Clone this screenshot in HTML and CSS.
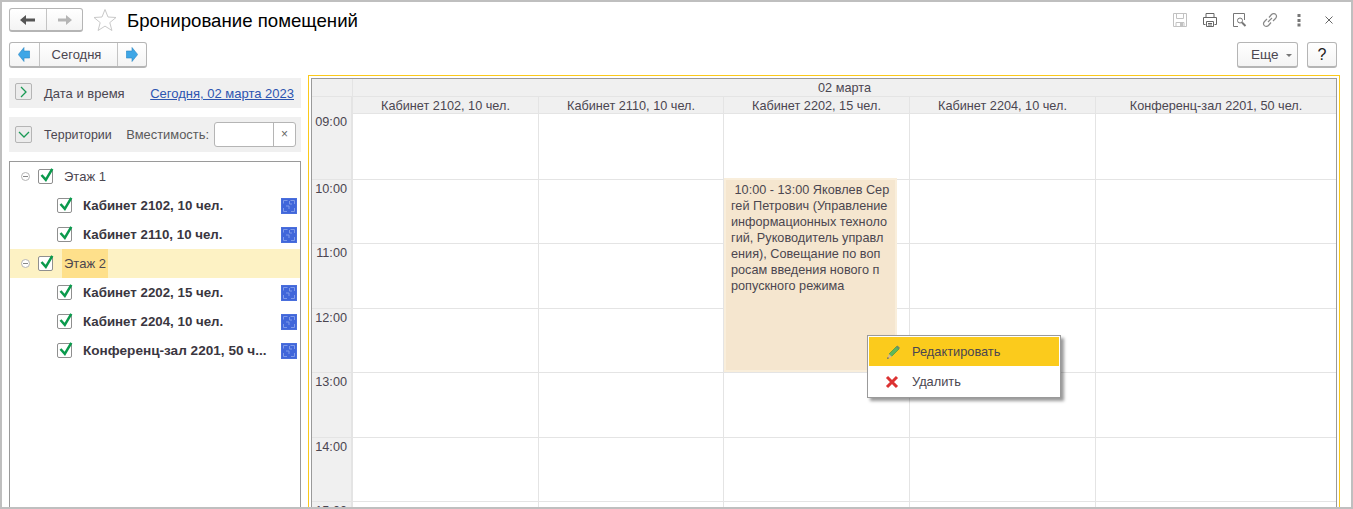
FILE: index.html
```html
<!DOCTYPE html>
<html lang="ru">
<head>
<meta charset="utf-8">
<title>Бронирование помещений</title>
<link rel="stylesheet" href="styles.css">
</head>
<body>
<svg width="0" height="0" class="defs">
  <defs>
    <symbol id="chk" viewBox="0 0 16 15" overflow="visible">
      <rect x="0.5" y="0.5" width="14" height="14" rx="1.5" fill="#fff" stroke="#8f8f8f"/>
      <path d="M3.500 6 L7.800 10.800 L14.300 -0.200" fill="none" stroke="#0a9a4c" stroke-width="2.500"/>
    </symbol>
    <symbol id="room" viewBox="0 0 16 16">
      <rect width="16" height="16" fill="#4a6fdc"/>
      <rect x="1" y="1" width="14" height="14" fill="#4066da"/>
      <path d="M2.500 5.500V2.500H6.500M9.500 2.500H13.500V6M13.500 10V13.500H10M6 13.500H2.500V10M8.500 3V6H11M5 8H8V11" fill="none" stroke="#7f9ae8"/>
    </symbol>
  </defs>
</svg>
<div class="window">
  <header class="titlebar">
    <div class="btn-group nav-group">
      <button class="seg seg-nav">
        <svg width="16" height="12" viewBox="0 0 16 12"><path d="M0 6 L6 1 V4.500 H15 V7.500 H6 V11 Z" fill="#555"/></svg>
      </button>
      <button class="seg seg-nav">
        <svg width="16" height="12" viewBox="0 0 16 12"><path d="M15 6 L9 1 V4.500 H1 V7.500 H9 V11 Z" fill="#b5b5b5"/></svg>
      </button>
    </div>
    <svg class="star" width="24" height="24" viewBox="0 0 24 24"><path d="M12 1.500 L15 9 L23 9.500 L16.800 14.600 L18.900 22.500 L12 18.100 L5.100 22.500 L7.200 14.600 L1 9.500 L9 9 Z" fill="#fff" stroke="#c9c9c9"/></svg>
    <h1 class="title">Бронирование помещений</h1>
    <div class="win-icons">
      <svg width="16" height="16" viewBox="0 0 16 16"><path d="M1.500 1.500h13v13h-13zM4.500 1.500v5h7v-5M4 14.500v-4h8v4" fill="none" stroke="#c2c2c2"/><rect x="8" y="11" width="3" height="3" fill="#c2c2c2"/></svg>
      <svg class="ic-print" width="16" height="16" viewBox="0 0 16 16"><path d="M4 5V1.500h8V5M3.500 12.500h-2v-7h13v7h-2M4.500 9.500h7v5h-7zM6 11.500h4M6 13h4" fill="none" stroke="#666"/></svg>
      <svg class="ic-find" width="16" height="16" viewBox="0 0 16 16"><path d="M6 14.500H1.500v-13h11V8" fill="none" stroke="#777"/><circle cx="8" cy="8.500" r="2.500" fill="none" stroke="#777"/><path d="M10 10.500l3.500 3.500" stroke="#777" stroke-width="2"/></svg>
      <svg class="ic-link" width="16" height="16" viewBox="0 0 16 16"><path d="M7 5.500l2.500-3c1.500-1.500 3.500-1 4.300 0s1 2.600-.3 4l-2.500 2.500M9 10.500l-2.500 3c-1.500 1.500-3.500 1-4.300 0s-1-2.600.3-4l2.500-2.500M6 10l4-4" fill="none" stroke="#888" stroke-width="1.200"/></svg>
      <svg class="ic-more" width="4" height="14" viewBox="0 0 4 14"><rect x="0.500" y="1" width="3" height="3" fill="#777"/><rect x="0.500" y="6" width="3" height="3" fill="#777"/><rect x="0.500" y="10.500" width="3" height="3" fill="#777"/></svg>
      <svg class="ic-close" width="8" height="8" viewBox="0 0 8 8"><path d="M.5.500l7 7M7.500.500l-7 7" stroke="#666"/></svg>
    </div>
  </header>

  <div class="toolbar">
    <div class="btn-group today-group">
      <button class="seg seg-arrow">
        <svg width="12" height="15" viewBox="0 0 12 15"><path d="M0.300 7.500 L6 0.500 V4 H11.700 V11 H6 V14.500 Z" fill="#3ea6e6" stroke="#2b86c4" stroke-width=".6"/></svg>
      </button>
      <button class="seg seg-today">Сегодня</button>
      <button class="seg seg-arrow">
        <svg width="12" height="15" viewBox="0 0 12 15"><path d="M11.700 7.500 L6 0.500 V4 H0.300 V11 H6 V14.500 Z" fill="#3ea6e6" stroke="#2b86c4" stroke-width=".6"/></svg>
      </button>
    </div>
    <div class="toolbar-right">
      <button class="btn btn-more">Еще <span class="caret"></span></button>
      <button class="btn btn-help">?</button>
    </div>
  </div>

  <div class="main">
    <aside class="side">
      <div class="panel panel-date">
        <span class="toggle"><svg width="10" height="12" viewBox="0 0 10 12"><path d="M2 1l5 5-5 5" fill="none" stroke="#1a9a55" stroke-width="1.300"/></svg></span>
        <span class="panel-label">Дата и время</span>
        <a class="date-link" href="#">Сегодня, 02 марта 2023</a>
      </div>
      <div class="panel panel-terr">
        <span class="toggle"><svg width="12" height="10" viewBox="0 0 12 10"><path d="M1 2l5 5 5-5" fill="none" stroke="#1a9a55" stroke-width="1.300"/></svg></span>
        <span class="panel-label">Территории</span>
        <span class="cap-label">Вместимость:</span>
        <span class="cap-input"><span class="cap-field"></span><span class="cap-clear">×</span></span>
      </div>
      <div class="tree">
        <div class="tree-row group"><span class="minus"></span><svg class="chk" width="16" height="15"><use href="#chk"/></svg><span class="group-name">Этаж 1</span></div>
        <div class="tree-row item"><svg class="chk" width="16" height="15"><use href="#chk"/></svg><span class="item-name">Кабинет 2102, 10 чел.</span><svg class="room" width="16" height="16"><use href="#room"/></svg></div>
        <div class="tree-row item"><svg class="chk" width="16" height="15"><use href="#chk"/></svg><span class="item-name">Кабинет 2110, 10 чел.</span><svg class="room" width="16" height="16"><use href="#room"/></svg></div>
        <div class="tree-row group current"><span class="minus"></span><svg class="chk" width="16" height="15"><use href="#chk"/></svg><span class="group-name selected">Этаж 2</span></div>
        <div class="tree-row item"><svg class="chk" width="16" height="15"><use href="#chk"/></svg><span class="item-name">Кабинет 2202, 15 чел.</span><svg class="room" width="16" height="16"><use href="#room"/></svg></div>
        <div class="tree-row item"><svg class="chk" width="16" height="15"><use href="#chk"/></svg><span class="item-name">Кабинет 2204, 10 чел.</span><svg class="room" width="16" height="16"><use href="#room"/></svg></div>
        <div class="tree-row item"><svg class="chk" width="16" height="15"><use href="#chk"/></svg><span class="item-name long">Конференц-зал 2201, 50 ч...</span><svg class="room" width="16" height="16"><use href="#room"/></svg></div>
      </div>
    </aside>

    <section class="cal-focus">
      <div class="cal">
        <div class="cal-row cal-date"><div class="c-time"></div><div class="c-date">02 марта</div></div>
        <div class="cal-row cal-head">
          <div class="c-time"></div>
          <div class="c-head">Кабинет 2102, 10 чел.</div>
          <div class="c-head">Кабинет 2110, 10 чел.</div>
          <div class="c-head">Кабинет 2202, 15 чел.</div>
          <div class="c-head">Кабинет 2204, 10 чел.</div>
          <div class="c-head">Конференц-зал 2201, 50 чел.</div>
        </div>
        <div class="cal-row hour h1"><div class="c-time">09:00</div><div class="c"></div><div class="c"></div><div class="c"></div><div class="c"></div><div class="c"></div></div>
        <div class="cal-row hour h2"><div class="c-time">10:00</div><div class="c"></div><div class="c"></div><div class="c"></div><div class="c"></div><div class="c"></div></div>
        <div class="cal-row hour h3"><div class="c-time">11:00</div><div class="c"></div><div class="c"></div><div class="c"></div><div class="c"></div><div class="c"></div></div>
        <div class="cal-row hour h2"><div class="c-time">12:00</div><div class="c"></div><div class="c"></div><div class="c"></div><div class="c"></div><div class="c"></div></div>
        <div class="cal-row hour h3"><div class="c-time">13:00</div><div class="c"></div><div class="c"></div><div class="c"></div><div class="c"></div><div class="c"></div></div>
        <div class="cal-row hour h2"><div class="c-time">14:00</div><div class="c"></div><div class="c"></div><div class="c"></div><div class="c"></div><div class="c"></div></div>
        <div class="cal-row hour h3"><div class="c-time">15:00</div><div class="c"></div><div class="c"></div><div class="c"></div><div class="c"></div><div class="c"></div></div>
        <div class="event">&nbsp;10:00 - 13:00 Яковлев Сер<br>гей Петрович (Управление<br>информационных техноло<br>гий, Руководитель управл<br>ения), Совещание по воп<br>росам введения нового п<br>ропускного режима</div>
      </div>
    </section>
  </div>

  <div class="menu">
    <div class="menu-item active">
      <svg width="16" height="16" viewBox="0 0 16 16"><path d="M4 10 L11.500 2.500 L14 5 L6.500 12.500 Z" fill="#5cb85c" stroke="#3f8f3f" stroke-width=".6"/><path d="M11 3l1.500-1.500 2.500 2.500L13.500 5.500z" fill="#6a8f6a"/><path d="M4 10l-2 5 5-2.200z" fill="#d8b98a"/><path d="M2.800 13l-.8 2 2-.8z" fill="#555"/></svg>
      <span>Редактировать</span>
    </div>
    <div class="menu-item item-del">
      <svg class="ic-del" width="14" height="14" viewBox="0 0 14 14"><path d="M2 2l10 10M12 2L2 12" stroke="#dc3232" stroke-width="3"/></svg>
      <span>Удалить</span>
    </div>
  </div>
</div>
</body>
</html>
```

FILE: styles.css
```css
* { box-sizing: border-box; }
html, body { margin: 0; padding: 0; }
body { font-family: "Liberation Sans", Arial, sans-serif; font-size: 13px; color: #4b4650; background: #fff; }
.defs { position: absolute; }
button { font-family: inherit; font-size: inherit; color: inherit; padding: 0; margin: 0; cursor: default; }

.window { position: relative; width: 1353px; height: 509px; border: 2px solid #bfbfbf; background: #fff; overflow: hidden; }

.titlebar { display: flex; align-items: center; height: 24px; margin: 6px 0 0 7px; }
.btn-group { display: flex; border: 1px solid #b5b5b5; border-bottom-width: 2px; border-radius: 3px; background: linear-gradient(#fff, #f4f4f4); }
.nav-group { width: 74px; height: 24px; }
.seg { border: 0; border-left: 1px solid #c4c4c4; background: none; display: flex; align-items: center; justify-content: center; }
.seg:first-child { border-left: 0; }
.seg-nav { width: 36px; }
.star { margin-left: 10px; }
.title { margin: 2px 0 0 10px; font-size: 18.650px; font-weight: 400; color: #000; white-space: nowrap; }
.win-icons { margin-left: auto; display: flex; align-items: center; height: 20px; margin-right: 18px; }
.ic-print, .ic-find, .ic-link { margin-left: 14px; }
.ic-more { margin-left: 19px; }
.ic-close { margin-left: 24px; }

.toolbar { display: flex; justify-content: space-between; align-items: center; height: 26px; margin: 10px 14px 0 7px; }
.today-group { width: 138px; height: 26px; }
.seg-arrow { width: 29px; padding-right: 1px; }
.seg-today { width: 78px; padding-right: 4px; font-size: 13px; }
.toolbar-right { display: flex; gap: 9px; }
.btn { height: 26px; border: 1px solid #b5b5b5; border-bottom-width: 2px; border-radius: 3px; background: linear-gradient(#fff, #f4f4f4); }
.btn-more { width: 61px; padding-left: 13px; font-size: 13.500px; text-align: left; white-space: nowrap; }
.caret { display: inline-block; width: 0; height: 0; margin-left: 4px; vertical-align: 2px; border: 3px solid transparent; border-top-color: #777; border-bottom-width: 0; }
.btn-help { width: 30px; font-size: 16px; color: #222; }

.main { display: flex; margin: 7px 0 0 7px; gap: 7px; }
.side { width: 292px; flex: none; }
.panel { display: flex; align-items: center; background: #f0f0f0; padding-left: 6px; }
.panel-date { height: 30px; margin-top: 3px; }
.panel-date .toggle { margin-bottom: 3px; }
.panel-date .panel-label, .date-link { margin-top: 1px; }
.panel-terr { height: 35px; margin-top: 9px; }
.panel-terr .panel-label { font-size: 12.400px; }
.toggle { width: 17px; height: 17px; border: 1px solid #b5b5b5; border-radius: 2px; background: #ececec; display: flex; align-items: center; justify-content: center; flex: none; }
.panel-label { margin-left: 12px; white-space: nowrap; }
.date-link { margin-left: auto; margin-right: 7px; color: #2d55b0; white-space: nowrap; }
.cap-label { margin-left: auto; font-size: 12.900px; white-space: nowrap; color: #5a5a5a; }
.cap-input { display: flex; margin: 0 5px; width: 82px; height: 25px; flex: none; border: 1px solid #b5b5b5; border-radius: 3px; background: #fff; }
.cap-field { flex: 1; border-right: 1px solid #b5b5b5; }
.cap-clear { width: 21px; text-align: center; font-size: 12px; line-height: 22px; color: #666; }

.tree { margin-top: 9px; height: 360px; border: 1px solid #9a9a9a; }
.tree-row { display: flex; align-items: center; height: 29px; }
.group { padding-left: 11px; }
.item { padding-left: 47px; padding-right: 3px; }
.minus { width: 9px; height: 9px; border: 1px solid #b5b5b5; border-radius: 50%; margin-right: 8px; position: relative; background: #fff; flex: none; }
.minus::after { content: ""; position: absolute; left: 1px; right: 1px; top: 3px; height: 1px; background: #888; }
.chk { flex: none; overflow: visible; }
.group-name { margin-left: 8px; height: 29px; line-height: 29px; padding: 0 2px; width: 46px; white-space: nowrap; }
.item-name { margin-left: 10px; font-weight: 700; font-size: 13.300px; color: #3a3640; white-space: nowrap; }
.item-name.long { font-size: 13.600px; }
.room { margin-left: auto; }
.current { background: #fdf2c4; }
.selected { background: #fee08b; }

.cal-focus { flex: 1; height: 432px; margin-right: 11px; border: 1px solid #fbc91a; border-bottom: 0; padding: 2px 2px 0; background: #fff; }
.cal { position: relative; border: 1px solid #9a9a9a; border-bottom: 0; height: 430px; overflow: hidden; }
.cal-row { display: grid; grid-template-columns: 41px 186px 185px 186px 186px 1fr; }
.cal-date { display: flex; height: 18px; background: #f0f0f0; border-bottom: 1px solid #e4e4e4; }
.cal-date .c-time { width: 41px; flex: none; border-right: 1px solid #e4e4e4; }
.c-date { flex: 1; text-align: center; line-height: 19px; }
.cal-head { height: 17px; background: #f0f0f0; }
.c-head { text-align: center; line-height: 18px; border-right: 1px solid #e4e4e4; border-bottom: 1px solid #e4e4e4; white-space: nowrap; overflow: hidden; }
.c-head:last-child { border-right: 0; }
.hour { background: #fff; }
.h1 { height: 66px; }
.h2 { height: 64px; }
.h3 { height: 65px; }
.c-time { background: #f0f0f0; border-right: 2px solid #e4e4e4; text-align: right; padding: 2px 4px 0 0; line-height: 15px; }
.h1 .c-time { padding-top: 1px; }
.c-date, .c-head, .c-time { font-size: 12.700px; }
.c { border-right: 1px solid #e4e4e4; border-bottom: 1px solid #e4e4e4; }
.c:last-child { border-right: 0; }
.hour .c-time { border-bottom: 1px solid #e4e4e4; }

.event { position: absolute; left: 412px; top: 99px; width: 173px; height: 194px; background: #f5e6cf; border: 2px solid #f9eedb; padding: 2px 0 0 5px; font-size: 12.700px; line-height: 16px; white-space: nowrap; }

.menu { position: absolute; left: 865px; top: 333px; width: 194px; height: 63px; border: 1px solid #9a9a9a; padding: 1px; background: #fff; box-shadow: 3px 3px 3px rgba(0,0,0,.4); }
.menu-item { display: flex; align-items: center; height: 30px; padding-left: 16px; font-size: 12.800px; }
.menu-item span { margin-left: 11px; }
.menu-item.active { height: 29px; background: #fbcb1c; }
.item-del { padding-top: 1px; }
.menu-item .ic-del + span { margin-left: 13px; }
```
